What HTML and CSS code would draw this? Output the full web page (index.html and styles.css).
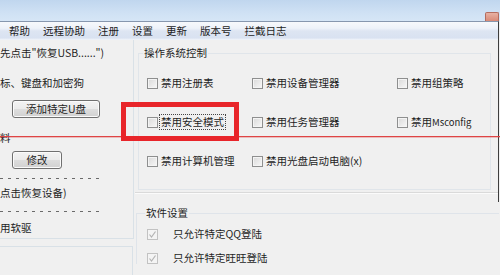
FILE: index.html
```html
<!DOCTYPE html>
<html lang="zh-CN">
<head>
  <meta charset="UTF-8" />
  <title>USB 管理 - 设置</title>
  <link rel="stylesheet" href="styles.css">
</head>
<body>

  <!-- Title bar -->
  <div class="titlebar">
    <span class="close"></span>
  </div>

  <div class="window">
    <!-- Menu -->
    <div class="menubar">
      <span>帮助</span>
      <span>远程协助</span>
      <span>注册</span>
      <span>设置</span>
      <span>更新</span>
      <span>版本号</span>
      <span>拦截日志</span>
    </div>

    <div class="main">
      <!-- Left column -->
      <div class="left">
        <div class="left-group">
          <p class="txt t1">先点击"恢复USB......")</p>
          <p class="txt t2">标、键盘和加密狗</p>
          <button class="btn btn-add">添加特定U盘</button>
          <p class="txt t3">料</p>
          <button class="btn btn-edit">修改</button>
          <div class="dash d1"></div>
          <p class="txt t4">点击恢复设备)</p>
          <div class="dash d2"></div>
          <p class="txt t5">用软驱</p>
        </div>
        <div class="left-box"></div>
      </div>

      <!-- Right column -->
      <div class="right">
        <div class="right-upper">
          <div class="panel">
            <fieldset class="group os-group">
              <legend>操作系统控制</legend>
              <div class="checks">
                <label class="check"><span class="box"></span><span>禁用注册表</span></label>
                <label class="check"><span class="box"></span><span>禁用设备管理器</span></label>
                <label class="check"><span class="box"></span><span>禁用组策略</span></label>
                <label class="check"><span class="box"></span><span class="focus">禁用安全模式</span></label>
                <label class="check"><span class="box"></span><span>禁用任务管理器</span></label>
                <label class="check"><span class="box"></span><span>禁用<span class="latin">Msconfig</span></span></label>
                <label class="check"><span class="box"></span><span>禁用计算机管理</span></label>
                <label class="check"><span class="box"></span><span>禁用光盘启动电脑(x)</span></label>
              </div>
            </fieldset>
          </div>
        </div>

        <fieldset class="group soft-group">
          <legend>软件设置</legend>
          <label class="check soft"><span class="box disabled"><svg viewBox="0 0 11 11" width="11" height="11"><path d="M2.5 5.5 L4.5 8 L8.5 2.5" fill="none" stroke="#b4b4b4" stroke-width="1.2"/></svg></span><span>只允许特定QQ登陆</span></label>
          <label class="check soft"><span class="box disabled"><svg viewBox="0 0 11 11" width="11" height="11"><path d="M2.5 5.5 L4.5 8 L8.5 2.5" fill="none" stroke="#b4b4b4" stroke-width="1.2"/></svg></span><span>只允许特定旺旺登陆</span></label>
        </fieldset>
      </div>
    </div>
  </div>

  <!-- Annotation overlays -->
  <div class="mark-line"></div>
  <div class="mark-box"></div>

</body>
</html>
```

FILE: styles.css
```css
* {
  box-sizing: border-box;
}

html, body {
  margin: 0;
  padding: 0;
}

body {
  width: 500px;
  height: 275px;
  overflow: hidden;
  position: relative;
  background: #f0f0f0;
  font-family: "Noto Sans CJK SC", "Microsoft YaHei", sans-serif;
  font-size: 10.5px;
  color: #1e1e1e;
}

p {
  margin: 0;
}

/* === TITLE BAR === */
.titlebar {
  height: 21px;
  background: linear-gradient(180deg, #c0d6ee 0%, #cfe1f4 60%, #d6e6f6 100%);
  display: flex;
  justify-content: flex-end;
  align-items: flex-end;
}

.close {
  width: 14px;
  height: 9px;
  margin: 0 1px 0 0;
  background: linear-gradient(180deg, #e7b1a3, #d98a77);
  border: 1px solid #b46c5e;
  border-bottom: none;
  border-radius: 2px 2px 0 0;
}

/* === WINDOW === */
.window {
  width: 499px;
}

.menubar {
  height: 19px;
  border-top: 1px solid #8797ae;
  border-right: 1px solid #3d3d3d;
  background: linear-gradient(180deg, #f7f9fc 0%, #eef2f9 35%, #dde5f2 50%, #d9e2f1 88%, #f2f5fa 100%);
  display: flex;
  align-items: center;
  gap: 13px;
  padding-left: 9px;
  line-height: 12px;
}

.main {
  display: grid;
  grid-template-columns: 135px 1fr;
  height: 235px;
}

/* === LEFT COLUMN === */
.left {
  display: flex;
  flex-direction: column;
  overflow: hidden;
}

.left-group {
  width: 134px;
  height: 199px;
  padding-top: 7px;
  border-right: 1px solid #d9e1e7;
  border-bottom: 1px solid #d9e1e7;
  display: flex;
  flex-direction: column;
  overflow: hidden;
}

.txt {
  height: 12px;
  line-height: 12px;
  white-space: nowrap;
}

.t2 { margin-top: 18px; }
.t3 { margin-top: 14px; }
.t4 { margin-top: 8px; }
.t5 { margin-top: 10px; }

.btn {
  height: 18px;
  margin-left: 12px;
  padding: 0;
  font: inherit;
  line-height: 14px;
  color: #1e1e1e;
  border: 1px solid #707070;
  border-radius: 3px;
  background: linear-gradient(180deg, #f3f3f3 0%, #ebebeb 48%, #dddddd 52%, #d1d1d1 100%);
  box-shadow: inset 0 0 0 1px #fbfbfb;
}

.btn-add {
  width: 88px;
  margin-top: 11px;
}

.btn-edit {
  width: 50px;
  margin-top: 7px;
}

.dash {
  height: 1px;
  width: 102px;
  background: repeating-linear-gradient(90deg, #6a6a6a 0 3px, transparent 3px 8px);
}

.d1 { margin-top: 9px; }
.d2 { margin-top: 12px; }

.left-box {
  flex: 1;
  width: 133px;
  margin-top: 7px;
  border-top: 1px solid #d9e1e7;
  border-right: 1px solid #d9e1e7;
}

/* === RIGHT COLUMN === */
.right {
  overflow: hidden;
}

.right-upper {
  height: 162px;
  border-right: 1px solid #3d3d3d;
}

.panel {
  height: 153px;
  padding: 7px 0 0 3px;
  border-bottom: 1px solid #dadada;
  box-shadow: 0 1px 0 #fbfbfb;
}

.group {
  margin: 0;
  padding: 0;
  border: 1px solid #e0e5ea;
  min-width: 0;
}

.group legend {
  padding: 0 1px;
  line-height: 12px;
  height: 12px;
}

.os-group {
  width: 353px;
  height: 143px;
}

.os-group legend {
  margin-left: 4px;
}

.checks {
  display: grid;
  grid-template-columns: 105px 145px auto;
  row-gap: 27px;
  margin-top: 18px;
  padding-left: 8px;
}

.check {
  display: flex;
  align-items: center;
  gap: 3px;
  height: 12px;
  line-height: 12px;
  white-space: nowrap;
}

.latin {
  font-size: 9.5px;
}

.box {
  width: 11px;
  height: 11px;
  flex: none;
  border: 1px solid #8e8f8f;
  background: linear-gradient(135deg, #d9d9d9, #f8f8f8);
  box-shadow: inset 0 0 0 1px #f4f4f4;
}

.focus {
  outline: 1px dotted #444;
  outline-offset: 1px;
}

.soft-group {
  width: 420px;
  margin: 5px 0 0 1px;
  padding-left: 10px;
  border-right: none;
  border-bottom: none;
  border-color: #dfe4ea;
}

.soft-group legend {
  margin-left: -2px;
}

.soft {
  gap: 15px;
  margin-top: 12px;
}

.soft:first-of-type {
  margin-top: 9px;
}

.box.disabled {
  border-color: #c2c2c2;
  background: #f4f4f4;
  box-shadow: none;
  display: flex;
}

.box.disabled svg {
  margin: -1px;
}

/* === ANNOTATIONS === */
.mark-line {
  position: absolute;
  left: 0;
  top: 136px;
  width: 500px;
  height: 1px;
  background: #df4545;
  box-shadow: 0 1px 0 rgba(223, 69, 69, 0.3);
}

.mark-box {
  position: absolute;
  left: 121px;
  top: 102px;
  width: 118px;
  height: 39px;
  border: 5px solid #e8252a;
}
```
